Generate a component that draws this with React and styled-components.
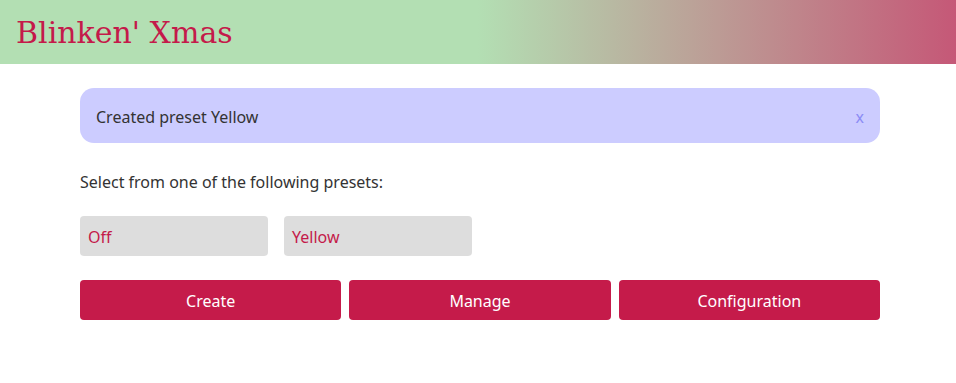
import React, { useState } from 'react'
import styled, { createGlobalStyle } from 'styled-components'

const GlobalStyle = createGlobalStyle`
    body {
        margin: 0;
        font-family: "Noto Sans", "Open Sans", sans-serif;
        font-size: 16px;
        color: #333;
        background: #fff;
    }
`

const Header = styled.header`
    height: 64px;
    display: flex;
    align-items: center;
    padding: 0 16px;
    background: linear-gradient(to right, #b3dfb3 50%, #c55877 100%);
`

const Title = styled.h1`
    margin: 0;
    font-family: "DejaVu Serif", serif;
    font-weight: normal;
    font-size: 30px;
    color: #c41a4a;
`

const Main = styled.main`
    width: 800px;
    margin: 24px 0 0 80px;
`

const Alert = styled.div`
    display: flex;
    align-items: center;
    justify-content: space-between;
    height: 55px;
    padding: 2px 16px 0;
    box-sizing: border-box;
    border-radius: 14px;
    background: #ccccff;
`

const Close = styled.button`
    border: none;
    background: none;
    padding: 0;
    font: inherit;
    color: #8b8bf5;
    cursor: pointer;
`

const Lead = styled.p`
    margin: 27px 0 0;
    line-height: 24px;
`

const PresetRow = styled.div`
    display: flex;
    gap: 16px;
    margin-top: 22px;
`

const Preset = styled.button`
    width: 188px;
    height: 40px;
    padding: 2px 8px 0;
    border: none;
    border-radius: 4px;
    background: #dddddd;
    color: #c41a4a;
    font: inherit;
    text-align: left;
    cursor: pointer;
`

const ActionRow = styled.div`
    display: grid;
    grid-template-columns: repeat(3, 1fr);
    gap: 8px;
    margin-top: 24px;
`

const Action = styled.button`
    height: 40px;
    padding: 2px 0 0;
    border: none;
    border-radius: 4px;
    background: #c51b4a;
    color: #fff;
    font: inherit;
    cursor: pointer;
`

const presets = ['Off', 'Yellow']
const actions = ['Create', 'Manage', 'Configuration']

const App = () => {
    const [message, setMessage] = useState('Created preset Yellow')

    return (
        <>
            <GlobalStyle />
            <Header>
                <Title>Blinken' Xmas</Title>
            </Header>
            <Main>
                {message && (
                    <Alert>
                        <span>{message}</span>
                        <Close onClick={() => setMessage(null)}>x</Close>
                    </Alert>
                )}
                <Lead>Select from one of the following presets:</Lead>
                <PresetRow>
                    {presets.map(p => <Preset key={p}>{p}</Preset>)}
                </PresetRow>
                <ActionRow>
                    {actions.map(a => <Action key={a}>{a}</Action>)}
                </ActionRow>
            </Main>
        </>
    )
}

export default App
